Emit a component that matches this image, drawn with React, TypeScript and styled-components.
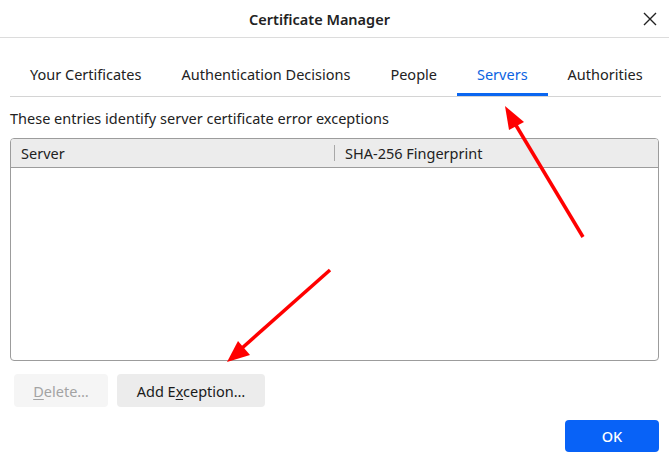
import React from "react";
import styled, { createGlobalStyle } from "styled-components";

const Global = createGlobalStyle`
  html, body { margin: 0; padding: 0; background: #ffffff; }
  body { font-family: "Noto Sans", "DejaVu Sans", sans-serif; color: #1c1c1c; }
`;

const Dialog = styled.div`
  position: relative;
  width: 669px;
  height: 461px;
  display: flex;
  flex-direction: column;
  background: #ffffff;
  overflow: hidden;
`;

const TitleBar = styled.div`
  height: 37px;
  border-bottom: 1px solid #dcdcdc;
  display: flex;
  align-items: center;
  justify-content: center;
  padding-right: 30px;
  position: relative;
`;

const Title = styled.div`
  font-size: 14.5px;
  font-weight: 600;
  color: #222;
`;

const Close = styled.button`
  position: absolute;
  right: 8px;
  top: 8px;
  width: 22px;
  height: 22px;
  border: none;
  background: transparent;
  padding: 0;
  display: flex;
  align-items: center;
  justify-content: center;
`;

const Body = styled.div`
  flex: 1;
  display: flex;
  flex-direction: column;
  padding: 14px 10px 9px 10px;
`;

const TabBar = styled.div`
  display: flex;
  border-bottom: 1px solid #d4d4d4;
  height: 44px;
  margin-right: -2px;
`;

const Tab = styled.div<{ $active?: boolean }>`
  flex: 0 0 auto;
  white-space: nowrap;
  padding: 0 20px;
  display: flex;
  align-items: center;
  font-size: 14.5px;
  color: ${(p) => (p.$active ? "#0b64e2" : "#222")};
  box-shadow: ${(p) => (p.$active ? "inset 0 -3px 0 #0a66f0" : "none")};
`;

const Description = styled.div`
  font-size: 14.5px;
  color: #222;
  margin-top: 11px;
  line-height: 20px;
`;

const Table = styled.div`
  margin-top: 10px;
  height: 221px;
  border: 1px solid #9c9c9c;
  border-radius: 4px;
  display: flex;
  flex-direction: column;
  overflow: hidden;
`;

const Header = styled.div`
  height: 28px;
  background: #ececec;
  border-bottom: 1px solid #9c9c9c;
  display: grid;
  grid-template-columns: 323px 1fr;
  align-items: center;
`;

const HeaderCell = styled.div<{ $divider?: boolean }>`
  font-size: 14.5px;
  color: #222;
  padding-left: 10px;
  border-left: ${(p) => (p.$divider ? "1px solid #a8a8a8" : "none")};
  line-height: 16px;
`;

const ButtonRow = styled.div`
  display: flex;
  gap: 9px;
  margin-top: 13px;
  padding-left: 4px;
`;

const Button = styled.button<{ $width: number; $disabled?: boolean }>`
  width: ${(p) => p.$width}px;
  height: 33px;
  border: none;
  border-radius: 4px;
  background: ${(p) => (p.$disabled ? "#f5f5f5" : "#ececec")};
  color: ${(p) => (p.$disabled ? "#a3a3a3" : "#1a1a1a")};
  font-family: inherit;
  font-size: 14.5px;
  padding: 0;
  u { text-decoration: underline; text-underline-offset: 2px; }
`;

const Footer = styled.div`
  display: flex;
  justify-content: flex-end;
  margin-top: 13px;
`;

const Primary = styled.button`
  width: 94px;
  height: 32px;
  border: none;
  border-radius: 4px;
  background: #0862f7;
  color: #ffffff;
  font-family: inherit;
  font-size: 14.5px;
  font-weight: 500;
`;

const Overlay = styled.svg`
  position: absolute;
  left: 0;
  top: 0;
  pointer-events: none;
`;

export default function App() {
  return (
    <>
      <Global />
      <Dialog>
        <TitleBar>
          <Title>Certificate Manager</Title>
          <Close aria-label="Close">
            <svg width="14" height="14" viewBox="0 0 14 14">
              <path d="M1 1 L13 13 M13 1 L1 13" stroke="#222" strokeWidth="1.4" />
            </svg>
          </Close>
        </TitleBar>
        <Body>
          <TabBar>
            <Tab>Your Certificates</Tab>
            <Tab>Authentication Decisions</Tab>
            <Tab>People</Tab>
            <Tab $active>Servers</Tab>
            <Tab>Authorities</Tab>
          </TabBar>
          <Description>These entries identify server certificate error exceptions</Description>
          <Table>
            <Header>
              <HeaderCell>Server</HeaderCell>
              <HeaderCell $divider>SHA-256 Fingerprint</HeaderCell>
            </Header>
          </Table>
          <ButtonRow>
            <Button $width={94} $disabled>
              <u>D</u>elete…
            </Button>
            <Button $width={148}>
              Add E<u>x</u>ception…
            </Button>
          </ButtonRow>
          <Footer>
            <Primary>OK</Primary>
          </Footer>
        </Body>
        <Overlay width="669" height="461" viewBox="0 0 669 461">
          <line x1="583" y1="237" x2="514" y2="122" stroke="#ff0000" strokeWidth="3.5" />
          <polygon points="505,106 524,122 509,130" fill="#ff0000" />
          <line x1="330" y1="270" x2="241" y2="349" stroke="#ff0000" strokeWidth="3.5" />
          <polygon points="227,362 238,341 250,355" fill="#ff0000" />
        </Overlay>
      </Dialog>
    </>
  );
}
